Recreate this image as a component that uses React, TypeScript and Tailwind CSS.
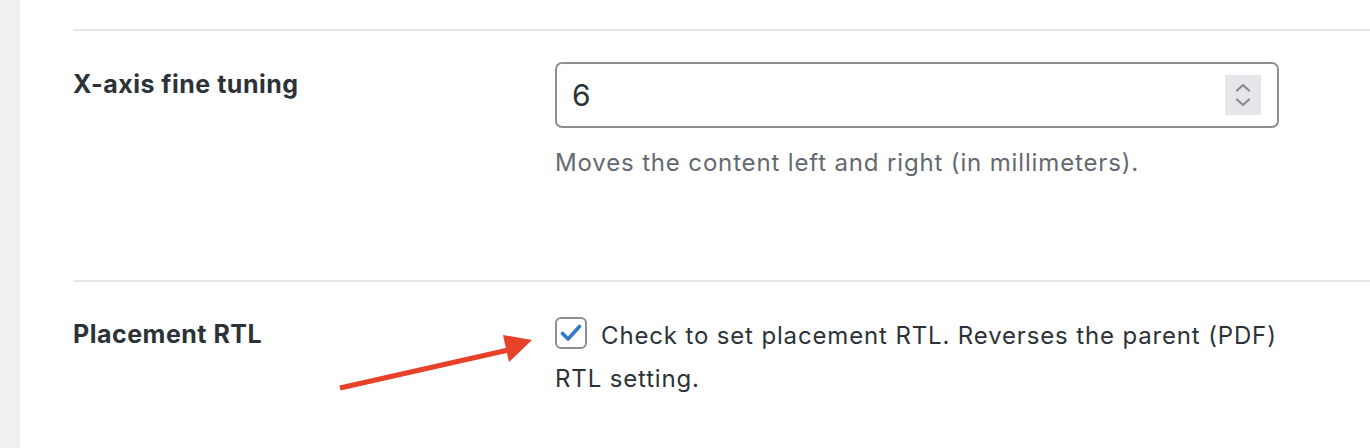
export default function App() {
  return (
    <div className="flex h-[448px] w-[1370px] overflow-hidden bg-white font-['Inter',sans-serif]">
      <div className="w-[20px] shrink-0 bg-[#f0f0f1]" />
      <div className="relative flex-1 pl-[53px]">
        <div className="h-[31px] border-b-2 border-[#e5e5e5]" />

        <div className="grid h-[251px] grid-cols-[482px_724px] border-b-2 border-[#e5e5e5] pt-[31px]">
          <div className="pt-[9px] text-[25px] font-bold leading-[26px] tracking-[0.5px] text-[#2c3338]">
            X-axis fine tuning
          </div>
          <div>
            <div className="flex h-[66px] items-center rounded-[7px] border-2 border-[#8c8f94] pl-[15px] pr-[16px]">
              <span className="flex-1 text-[30px] leading-none text-[#2c3338]">6</span>
              <div className="flex h-[40px] w-[36px] flex-col items-center justify-center gap-[6px] bg-[#e6e6eb]">
                <svg width="16" height="9" viewBox="0 0 16 9" fill="none">
                  <path d="M2 7.5 8 2l6 5.5" stroke="#8a8a92" strokeWidth="2.2" strokeLinecap="round" strokeLinejoin="round" />
                </svg>
                <svg width="16" height="9" viewBox="0 0 16 9" fill="none">
                  <path d="M2 1.5 8 7l6-5.5" stroke="#8a8a92" strokeWidth="2.2" strokeLinecap="round" strokeLinejoin="round" />
                </svg>
              </div>
            </div>
            <p className="mt-[19px] text-[24px] leading-[32px] tracking-[0.85px] text-[#646970]">
              Moves the content left and right (in millimeters).
            </p>
          </div>
        </div>

        <div className="grid grid-cols-[482px_724px] pt-[32px]">
          <div className="pt-[7px] text-[25px] font-bold leading-[26px] tracking-[0.5px] text-[#2c3338]">
            Placement RTL
          </div>
          <div className="text-[24px] leading-[43px] tracking-[0.85px] text-[#2c3338]">
            <span className="relative top-[-4px] mr-[14px] inline-flex h-[32px] w-[32px] items-center justify-center rounded-[6px] border-2 border-[#8c8f94] align-middle">
              <svg width="22" height="18" viewBox="0 0 22 18" fill="none">
                <path d="M2.5 9.5 8 15 19.5 2.5" stroke="#3779c6" strokeWidth="3.6" strokeLinecap="round" strokeLinejoin="round" />
              </svg>
            </span>
            Check to set placement RTL. Reverses the parent (PDF) RTL setting.
          </div>
        </div>

        <svg className="absolute left-[317px] top-[330px]" width="220" height="70" viewBox="0 0 220 70" fill="none">
          <path d="M3 58 176 19" stroke="#e8412a" strokeWidth="5" />
          <path d="M166 5 195 10 172 32Z" fill="#e8412a" />
        </svg>
      </div>
    </div>
  );
}
